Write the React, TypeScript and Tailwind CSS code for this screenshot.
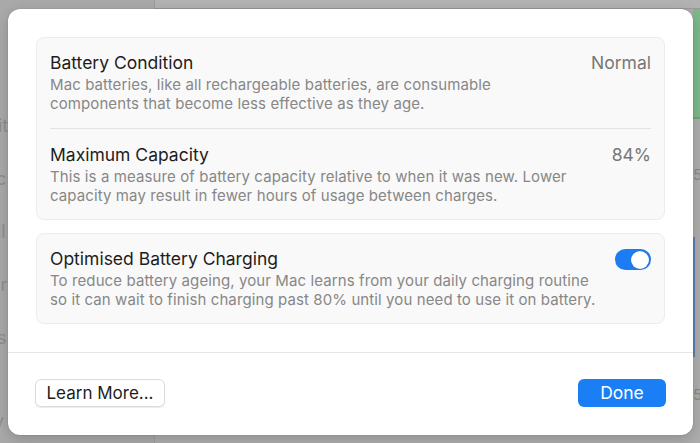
import React from "react";

export default function App() {
  return (
    <div
      className="relative w-[700px] h-[443px] overflow-hidden bg-[#adadad] flex"
      style={{ fontFamily: "Inter, 'Noto Sans', sans-serif" }}
    >
      {/* dimmed background window */}
      <div className="w-[155px] h-full bg-[#a9a9a9] border-r border-[#9d9d9d] flex flex-col pt-[112px] gap-[26px] text-[18px] text-[#8e8e8e]">
        <span className="-ml-[2px]">it</span>
        <span className="-ml-[4px]">c</span>
        <span className="-ml-[3px]">ll</span>
        <span className="-ml-[10px]">er</span>
        <span className="-ml-[3px]">s</span>
        <span className="mt-[30px] -ml-[6px]">v</span>
      </div>
      <div className="flex-1 h-full flex flex-col">
        <div className="h-[9px] bg-[#b2b2b2] border-b border-[#9a9a9a]" />
        <div className="flex-1 flex justify-end">
          <div className="w-[7px] flex flex-col">
            <div className="h-[110px] bg-[#7db98b] border-b-2 border-[#6aa777]" />
            <div className="h-[48px] text-[15px] text-[#8a8a8a] pt-[48px] leading-none">5</div>
            <div className="h-[120px] mt-[70px] border-l-2 border-[#5b83b6]" />
            <div className="text-[15px] text-[#8a8a8a] mt-[30px] leading-none">5</div>
          </div>
        </div>
      </div>

      {/* sheet */}
      <div className="absolute left-[8px] top-[9px] w-[685px] h-[426px] bg-white rounded-[12px] shadow-[0_0_1px_rgba(0,0,0,0.35),0_4px_14px_rgba(0,0,0,0.18)] flex flex-col">
        <div className="flex flex-col gap-[13px] px-[28px] pt-[28px] pb-[28px]">
          <div className="rounded-[8px] bg-[#f9f9f9] border border-[#ececec] flex flex-col px-[13px]">
            <div className="flex justify-between pt-[13px] pb-[15px]">
              <div className="flex flex-col">
                <div className="text-[17.5px] leading-[24px] text-[#1d1d1d]">Battery Condition</div>
                <div className="text-[15px] tracking-[0.1px] leading-[19px] text-[#878787]">
                  Mac batteries, like all rechargeable batteries, are consumable
                  <br />
                  components that become less effective as they age.
                </div>
              </div>
              <div className="text-[17.5px] leading-[24px] text-[#777777]">Normal</div>
            </div>
            <div className="h-px bg-[#e3e3e3]" />
            <div className="flex justify-between pt-[14px] pb-[14px]">
              <div className="flex flex-col">
                <div className="text-[17.5px] leading-[24px] text-[#1d1d1d]">Maximum Capacity</div>
                <div className="text-[15px] tracking-[0.1px] leading-[19px] text-[#878787]">
                  This is a measure of battery capacity relative to when it was new. Lower
                  <br />
                  capacity may result in fewer hours of usage between charges.
                </div>
              </div>
              <div className="text-[17.5px] leading-[24px] text-[#777777]">84%</div>
            </div>
          </div>

          <div className="rounded-[8px] bg-[#f9f9f9] border border-[#ececec] flex justify-between px-[13px] pt-[13px] pb-[14px]">
            <div className="flex flex-col">
              <div className="text-[17.5px] leading-[24px] text-[#1d1d1d]">Optimised Battery Charging</div>
              <div className="text-[15px] tracking-[0.1px] leading-[19px] text-[#878787]">
                To reduce battery ageing, your Mac learns from your daily charging routine
                <br />
                so it can wait to finish charging past 80% until you need to use it on battery.
              </div>
            </div>
            <div className="mt-[2px] w-[36px] h-[21px] rounded-full bg-[#1d7cf2] flex items-center justify-end pr-[2px] shrink-0">
              <div className="w-[18px] h-[18px] rounded-full bg-white shadow-[0_0_1px_rgba(0,0,0,0.4)]" />
            </div>
          </div>
        </div>

        <div className="h-px bg-[#e6e6e6]" />

        <div className="flex-1 flex items-center justify-between px-[27px] pb-[2px]">
          <button className="h-[28px] w-[130px] rounded-[6px] bg-white border border-[#dcdcdc] shadow-[0_1px_1px_rgba(0,0,0,0.08)] text-[17px] text-[#1d1d1d] leading-none">
            Learn More...
          </button>
          <button className="h-[28px] w-[88px] rounded-[6px] bg-[#1a7ef5] text-[17.5px] text-white leading-none">
            Done
          </button>
        </div>
      </div>
    </div>
  );
}
